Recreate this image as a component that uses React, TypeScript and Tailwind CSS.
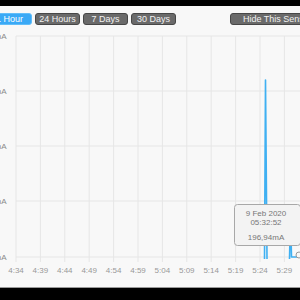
import React from 'react';

const ranges = ['1 Hour', '24 Hours', '7 Days', '30 Days'];
const times = ['4:34', '4:39', '4:44', '4:49', '4:54', '4:59', '5:04', '5:09', '5:14', '5:19', '5:24', '5:29'];
const levels = ['250mA', '187mA', '125mA', '62mA', '0mA'];

const gridY = [36, 91, 146, 201, 257];
const gridX = times.map((_, i) => 16 + i * 24.4);

export default function App() {
  return (
    <div
      className="w-[300px] h-[300px] overflow-hidden bg-black flex flex-col"
      style={{ fontFamily: '"Liberation Sans", Arial, sans-serif' }}
    >
      <div className="h-[6px] shrink-0 bg-black" />
      <div className="flex-1 bg-[#f8f8f8] flex flex-col border-b border-[#9a9a9a]">
        {/* Range buttons */}
        <div className="h-[24px] pt-[7px] flex items-start ml-[-13px] gap-[3px] shrink-0">
          {ranges.map((r, i) => (
            <button
              key={r}
              className={
                i === 0
                  ? 'w-[45px] shrink-0 h-[12px] rounded-[3px] bg-[#3aa9f6] border border-[#62bdf8] text-white text-[9px] leading-[10px] flex items-center justify-center'
                  : 'w-[45px] shrink-0 h-[12px] rounded-[3px] bg-[#6a6a6a] border border-[#474747] text-[#f2f2f2] text-[9px] leading-[10px] flex items-center justify-center'
              }
            >
              {r}
            </button>
          ))}
          <button className="ml-[51px] w-[90px] shrink-0 h-[12px] rounded-[3px] bg-[#6a6a6a] border border-[#474747] text-[#f2f2f2] text-[9px] leading-[10px] flex items-center pl-[12px] whitespace-nowrap">
            Hide This Sensor
          </button>
        </div>

        {/* Chart */}
        <svg width={300} height={257} viewBox="0 30 300 257" className="block">
          {gridY.map((y) => (
            <line key={y} x1={16} x2={300} y1={y} y2={y} stroke="#e6e6e6" strokeWidth={1} />
          ))}
          {gridX.map((x) => (
            <line key={x} x1={x} x2={x} y1={36} y2={262} stroke="#e6e6e6" strokeWidth={1} />
          ))}
          {levels.map((l, i) => (
            <text key={l} x={6.5} y={gridY[i] + 3} textAnchor="end" fontSize={8} fill="#8a8a8a">
              {l}
            </text>
          ))}
          {times.map((t, i) => (
            <text key={t} x={gridX[i]} y={273} textAnchor="middle" fontSize={8} fill="#999">
              {t}
            </text>
          ))}

          {/* data line */}
          <polyline
            points="264.5,259 265.5,80 267,259"
            fill="none"
            stroke="#3fb0f2"
            strokeWidth={1.6}
            strokeLinejoin="round"
          />
          <polyline
            points="289.5,259 290.5,215 291.5,257 297,257"
            fill="none"
            stroke="#3fb0f2"
            strokeWidth={1.6}
            strokeLinejoin="round"
          />
          <circle cx={299} cy={255} r={3} fill="#f8f8f8" stroke="#999" strokeWidth={1} />

          {/* tooltip */}
          <rect x={234.5} y={204.5} width={66} height={41} rx={3} fill="#f3f3f3" stroke="#a8a8a8" strokeWidth={1} />
          <text x={266} y={216} textAnchor="middle" fontSize={8} fill="#777">9 Feb 2020</text>
          <text x={266} y={225} textAnchor="middle" fontSize={8} fill="#777">05:32:52</text>
          <text x={266} y={240} textAnchor="middle" fontSize={8} fill="#777">196,94mA</text>
        </svg>
      </div>
      <div className="h-[12px] shrink-0 bg-black" />
    </div>
  );
}
